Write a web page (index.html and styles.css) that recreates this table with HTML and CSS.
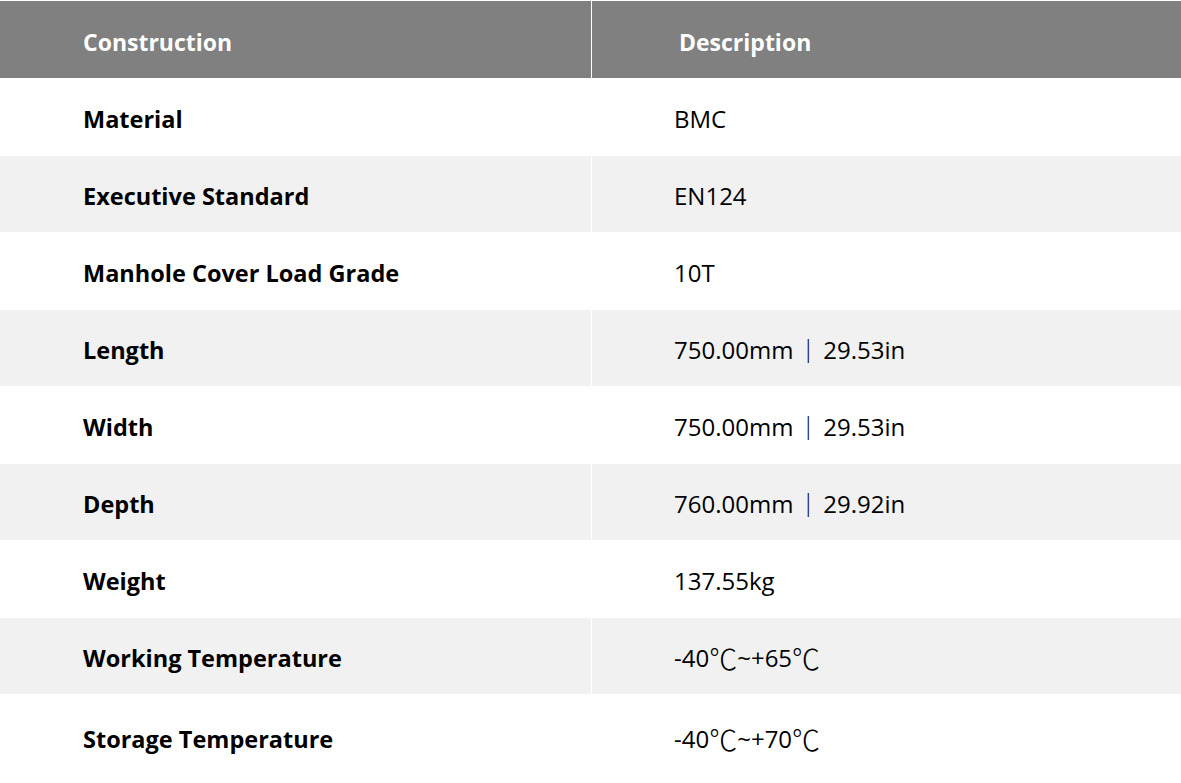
FILE: index.html
```html
<!DOCTYPE html>
<html lang="en">
<head>
<meta charset="utf-8">
<title>Specifications</title>
<link rel="stylesheet" href="styles.css">
</head>
<body>
<div class="spec">
  <div class="cell head first">Construction</div>
  <div class="cell head second">Description</div>

  <div class="cell name">Material</div>
  <div class="cell value">BMC</div>

  <div class="cell name alt">Executive Standard</div>
  <div class="cell value alt">EN124</div>

  <div class="cell name">Manhole Cover Load Grade</div>
  <div class="cell value">10T</div>

  <div class="cell name alt">Length</div>
  <div class="cell value alt">750.00mm<span class="bar">｜</span>29.53in</div>

  <div class="cell name">Width</div>
  <div class="cell value">750.00mm<span class="bar">｜</span>29.53in</div>

  <div class="cell name alt">Depth</div>
  <div class="cell value alt">760.00mm<span class="bar">｜</span>29.92in</div>

  <div class="cell name">Weight</div>
  <div class="cell value">137.55kg</div>

  <div class="cell name alt">Working Temperature</div>
  <div class="cell value alt">-40<span class="deg">℃</span>~+65<span class="deg">℃</span></div>

  <div class="cell name last">Storage Temperature</div>
  <div class="cell value last">-40<span class="deg">℃</span>~+70<span class="deg">℃</span></div>
</div>
</body>
</html>
```

FILE: styles.css
```css
html, body {
  margin: 0;
  padding: 0;
  background: #ffffff;
}

body {
  padding-top: 1px;
  font-family: "Open Sans", "Noto Sans", "Noto Sans CJK SC", sans-serif;
  color: #000000;
}

.spec {
  display: grid;
  grid-template-columns: 591px 1fr;
  grid-template-rows: 77px repeat(4, 78px 76px) 89px;
  column-gap: 1px;
  width: 1181px;
}

.cell {
  display: flex;
  align-items: center;
  padding-top: 3px;
  box-sizing: border-box;
  background: #ffffff;
  white-space: nowrap;
}

.head {
  background: #808080;
  color: #ffffff;
  font-weight: 700;
  font-size: 23px;
  padding-top: 4px;
}

.head.first {
  padding-left: 83px;
}

.head.second {
  padding-left: 87px;
}

.name {
  padding-left: 83px;
  font-weight: 700;
  font-size: 23.5px;
}

.value {
  padding-left: 82px;
  font-weight: 400;
  font-size: 24px;
}

.alt {
  background: #f1f1f1;
}

.last {
  padding-top: 0;
}

.bar {
  font-family: "Noto Sans CJK SC", sans-serif;
  color: #000000;
  padding: 0 3px;
}

.deg {
  font-family: "Noto Sans CJK SC", sans-serif;
  font-weight: 300;
  font-size: 28px;
}
```
